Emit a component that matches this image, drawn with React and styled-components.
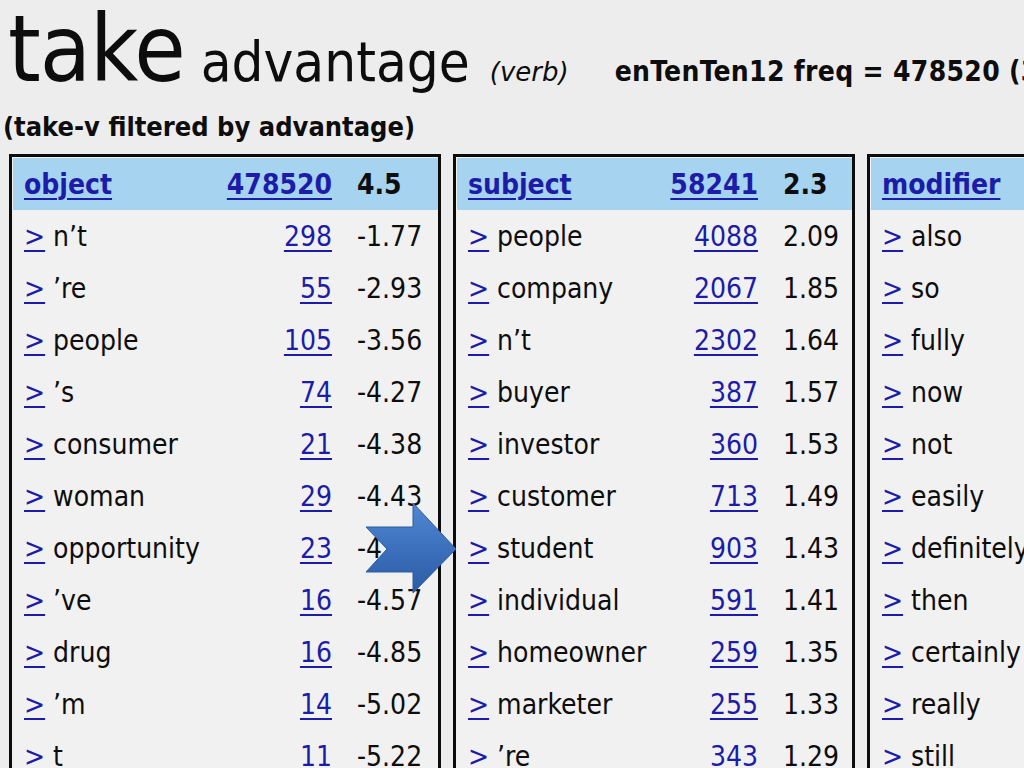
import React from 'react'
import styled, { createGlobalStyle } from 'styled-components'

const GlobalStyle = createGlobalStyle`
  html, body {
    margin: 0;
    padding: 0;
    background: #ededed;
  }
`

const tables = [
  {
    name: 'object',
    freq: '478520',
    score: '4.5',
    width: 432,
    scoreCol: 106,
    rows: [
      ['n\u2019t', '298', '-1.77'],
      ['\u2019re', '55', '-2.93'],
      ['people', '105', '-3.56'],
      ['\u2019s', '74', '-4.27'],
      ['consumer', '21', '-4.38'],
      ['woman', '29', '-4.43'],
      ['opportunity', '23', '-4.54'],
      ['\u2019ve', '16', '-4.57'],
      ['drug', '16', '-4.85'],
      ['\u2019m', '14', '-5.02'],
      ['t', '11', '-5.22'],
    ],
  },
  {
    name: 'subject',
    freq: '58241',
    score: '2.3',
    width: 402,
    scoreCol: 94,
    rows: [
      ['people', '4088', '2.09'],
      ['company', '2067', '1.85'],
      ['n\u2019t', '2302', '1.64'],
      ['buyer', '387', '1.57'],
      ['investor', '360', '1.53'],
      ['customer', '713', '1.49'],
      ['student', '903', '1.43'],
      ['individual', '591', '1.41'],
      ['homeowner', '259', '1.35'],
      ['marketer', '255', '1.33'],
      ['\u2019re', '343', '1.29'],
    ],
  },
  {
    name: 'modifier',
    freq: '91200',
    score: '1.9',
    width: 400,
    scoreCol: 94,
    rows: [
      ['also', '8120', '1.12'],
      ['so', '3915', '0.98'],
      ['fully', '2874', '0.95'],
      ['now', '2109', '0.91'],
      ['not', '1988', '0.87'],
      ['easily', '1412', '0.84'],
      ['definitely', '1306', '0.80'],
      ['then', '1177', '0.77'],
      ['certainly', '958', '0.75'],
      ['really', '902', '0.71'],
      ['still', '866', '0.69'],
    ],
  },
]

export default function App() {
  return (
    <Page>
      <GlobalStyle />
      <TitleRow>
        <Lemma>take</Lemma>
        <Filter>advantage</Filter>
        <Pos>(verb)</Pos>
        <Freq>enTenTen12 freq = 478520 (38.10 per million)</Freq>
      </TitleRow>
      <Subtitle>(take-v filtered by advantage)</Subtitle>
      <Columns>
        {tables.map((t) => (
          <Box key={t.name} width={t.width}>
            <HeadRow scoreCol={t.scoreCol}>
              <Link href="#">{t.name}</Link>
              <Count href="#">{t.freq}</Count>
              <Score>{t.score}</Score>
            </HeadRow>
            {t.rows.map(([word, count, score]) => (
              <Row key={word} scoreCol={t.scoreCol}>
                <Word>
                  <Link href="#">&gt;</Link> {word}
                </Word>
                <Count href="#">{count}</Count>
                <Score>{score}</Score>
              </Row>
            ))}
          </Box>
        ))}
      </Columns>
      <Arrow viewBox="0 0 92 92" width="92" height="92">
        <defs>
          <linearGradient id="arrowFill" x1="0" y1="0" x2="0" y2="1">
            <stop offset="0" stopColor="#5289d2" />
            <stop offset="0.5" stopColor="#3c70bd" />
            <stop offset="1" stopColor="#2c5ca3" />
          </linearGradient>
        </defs>
        <polygon
          points="0,24 47,24 47,0 90,46 47,90 47,69 0,69 21,46"
          fill="url(#arrowFill)"
          stroke="#2d5c9e"
          strokeWidth="1"
        />
      </Arrow>
    </Page>
  )
}

const Page = styled.div`
  position: relative;
  width: 1024px;
  height: 768px;
  overflow: hidden;
  background: #ededed;
  padding-left: 3px;
  box-sizing: border-box;
  font-family: 'DejaVu Sans Condensed', 'DejaVu Sans', sans-serif;
  font-stretch: condensed;
  color: #0d0d0d;
`
const TitleRow = styled.div`
  display: flex;
  align-items: baseline;
  height: 98px;
  white-space: nowrap;
  padding-left: 5px;
`
const Lemma = styled.span`
  font-size: 93px;
  line-height: 98px;
  letter-spacing: -1px;
`
const Filter = styled.span`
  font-size: 56px;
  margin-left: 16px;
`
const Pos = styled.span`
  font-family: 'DejaVu Sans', sans-serif;
  font-stretch: normal;
  font-style: italic;
  font-size: 26px;
  margin-left: 20px;
`
const Freq = styled.span`
  font-size: 28px;
  font-weight: bold;
  letter-spacing: 0.3px;
  margin-left: 46px;
`
const Subtitle = styled.div`
  font-size: 27px;
  font-weight: bold;
  height: 56px;
  line-height: 58px;
  white-space: nowrap;
`
const Columns = styled.div`
  display: flex;
  gap: 12px;
  margin-left: 6px;
`
const Box = styled.div`
  flex: 0 0 ${(p) => p.width}px;
  border: 3px solid #0c0c0c;
  border-bottom: none;
  box-sizing: border-box;
  padding: 1px 0 0 1px;
  background: #f1f1f1;
`
const Row = styled.div`
  display: grid;
  grid-template-columns: 1fr auto ${(p) => p.scoreCol}px;
  align-items: center;
  height: 52px;
  padding-left: 11px;
  font-size: 28px;
  white-space: nowrap;
`
const HeadRow = styled(Row)`
  background: #a6d3f0;
  font-weight: bold;
`
const Word = styled.span`
  overflow: hidden;
`
const Link = styled.a`
  color: #1c1ca8;
  text-decoration: underline;
  text-decoration-thickness: 2px;
  text-underline-offset: 4px;
`
const Count = styled(Link)`
  text-align: right;
`
const Score = styled.span`
  padding-left: 25px;
`
const Arrow = styled.svg`
  position: absolute;
  left: 366px;
  top: 503px;
`
